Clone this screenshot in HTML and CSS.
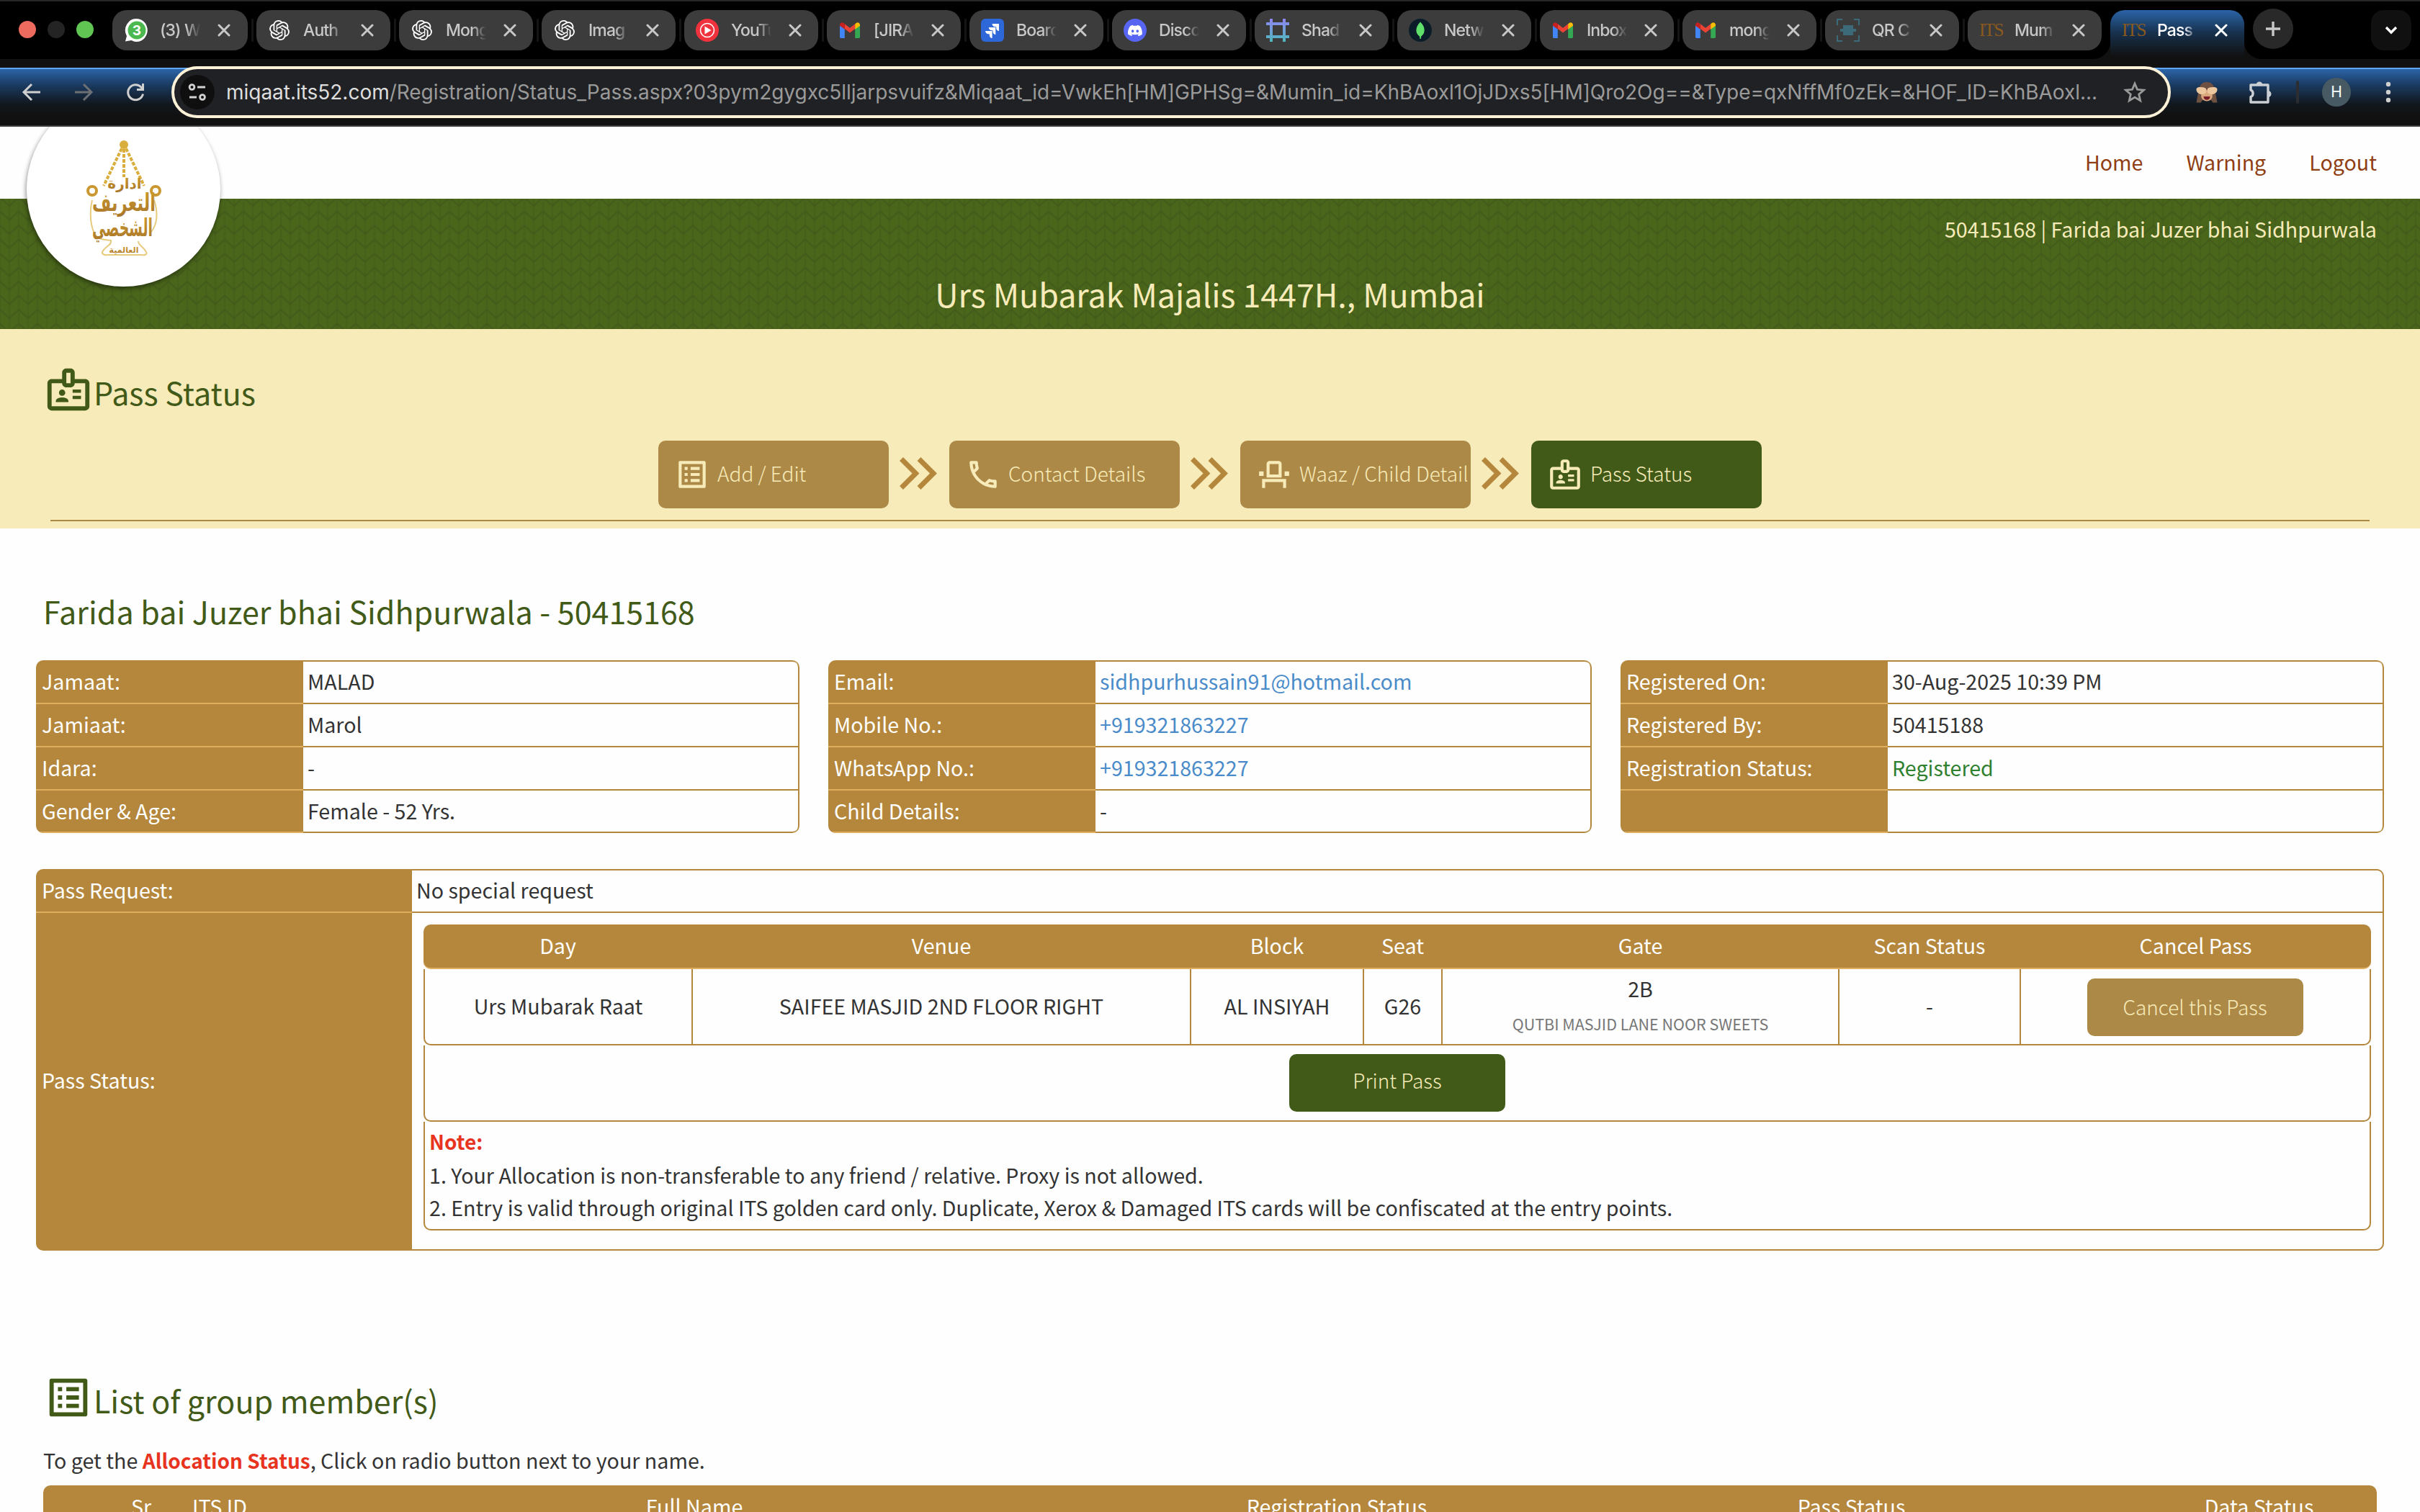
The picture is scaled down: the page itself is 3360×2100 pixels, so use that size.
FILE: index.html
```html
<!DOCTYPE html>
<html lang="en">
<head>
<meta charset="utf-8">
<title>Pass Status</title>
<link rel="stylesheet" href="styles.css">
</head>
<body>
<svg class="sprite" width="0" height="0" aria-hidden="true">
  <defs>
    <linearGradient id="shadeGrad" x1="0" y1="0" x2="0" y2="1"><stop offset="0" stop-color="#8f86f2"/><stop offset="1" stop-color="#4fb8bd"/></linearGradient>
    <linearGradient id="goldGrad" x1="0" y1="0" x2="0" y2="1"><stop offset="0" stop-color="#cf9d2c"/><stop offset="1" stop-color="#a8742a"/></linearGradient>
    <symbol id="openai" viewBox="0 0 24 24"><path fill="#fff" d="M22.2819 9.8211a5.9847 5.9847 0 0 0-.5157-4.9108 6.0462 6.0462 0 0 0-6.5098-2.9A6.0651 6.0651 0 0 0 4.9807 4.1818a5.9847 5.9847 0 0 0-3.9977 2.9 6.0462 6.0462 0 0 0 .7427 7.0966 5.98 5.98 0 0 0 .511 4.9107 6.051 6.051 0 0 0 6.5146 2.9001A5.9847 5.9847 0 0 0 13.2599 24a6.0557 6.0557 0 0 0 5.7718-4.2058 5.9894 5.9894 0 0 0 3.9977-2.9001 6.0557 6.0557 0 0 0-.7475-7.0729zm-9.022 12.6081a4.4755 4.4755 0 0 1-2.8764-1.0408l.1419-.0804 4.7783-2.7582a.7948.7948 0 0 0 .3927-.6813v-6.7369l2.02 1.1686a.071.071 0 0 1 .038.052v5.5826a4.504 4.504 0 0 1-4.4945 4.4944zm-9.6607-4.1254a4.4708 4.4708 0 0 1-.5346-3.0137l.142.0852 4.783 2.7582a.7712.7712 0 0 0 .7806 0l5.8428-3.3685v2.3324a.0804.0804 0 0 1-.0332.0615L9.74 19.9502a4.4992 4.4992 0 0 1-6.1408-1.6464zM2.3408 7.8956a4.485 4.485 0 0 1 2.3655-1.9728V11.6a.7664.7664 0 0 0 .3879.6765l5.8144 3.3543-2.0201 1.1685a.0757.0757 0 0 1-.071 0l-4.8303-2.7865A4.504 4.504 0 0 1 2.3408 7.872zm16.5963 3.8558L13.1038 8.364 15.1192 7.2a.0757.0757 0 0 1 .071 0l4.8303 2.7913a4.4944 4.4944 0 0 1-.6765 8.1042v-5.6772a.79.79 0 0 0-.407-.667zm2.0107-3.0231l-.142-.0852-4.7735-2.7818a.7759.7759 0 0 0-.7854 0L9.409 9.2297V6.8974a.0662.0662 0 0 1 .0284-.0615l4.8303-2.7866a4.4992 4.4992 0 0 1 6.6802 4.66zM8.3065 12.863l-2.02-1.1638a.0804.0804 0 0 1-.038-.0567V6.0742a4.4992 4.4992 0 0 1 7.3757-3.4537l-.142.0805L8.704 5.459a.7948.7948 0 0 0-.3927.6813zm1.0976-2.3654l2.602-1.4998 2.6069 1.4998v2.9994l-2.5974 1.4997-2.6067-1.4997Z"/></symbol>
    <symbol id="gmail" viewBox="0 0 32 32">
      <path fill="#4285f4" d="M2 9v16.5A1.8 1.8 0 0 0 3.8 27H8.800V14z"/>
      <path fill="#34a853" d="M30 9v16.500A1.800 1.800 0 0 1 28.200 27H23.200V14z"/>
      <path fill="#ea4335" d="M8.800 14V7.200L16 12.800l7.200-5.600V14L16 19.600z"/>
      <path fill="#c5221f" d="M2 8.600v1.200l6.800 5V7.200L7 5.800C5 4.400 2 5.800 2 8.600z"/>
      <path fill="#fbbc04" d="M30 8.600v1.200l-6.800 5V7.200L25 5.800c2-1.400 5 0 5 2.800z"/>
    </symbol>
    <symbol id="close" viewBox="0 0 18 18"><path d="M2 2l14 14M16 2L2 16" stroke="currentColor" stroke-width="3" stroke-linecap="round"/></symbol>
    <symbol id="list" viewBox="0 0 24 24"><path fill="currentColor" d="M19 5v14H5V5h14m1.100-2H3.900c-.5 0-.9.4-.9.900v16.200c0 .4.4.9.9.9h16.200c.4 0 .9-.5.9-.9V3.900c0-.5-.5-.9-.9-.9zM11 7h6v2h-6V7zm0 4h6v2h-6v-2zm0 4h6v2h-6zM7 7h2v2H7zm0 4h2v2H7zm0 4h2v2H7z"/></symbol>
    <symbol id="badge" viewBox="0 0 24 24"><path fill="currentColor" fill-rule="evenodd" d="M20 7h-5V4c0-1.100-.9-2-2-2h-2c-1.100 0-2 .9-2 2v3H4c-1.100 0-2 .9-2 2v11c0 1.100.9 2 2 2h16c1.100 0 2-.9 2-2V9c0-1.100-.9-2-2-2zM11 4h2v5h-2zM20 20H4V9h5c0 1.100.9 2 2 2h2c1.100 0 2-.9 2-2h5z"/><path fill="currentColor" d="M9 12c.83 0 1.500.67 1.500 1.500S9.830 15 9 15s-1.500-.67-1.500-1.500S8.170 12 9 12zM12 18H6v-.43c0-.6.36-1.150.92-1.390a5.300 5.300 0 0 1 4.160 0c.56.24.92.79.92 1.390zM14 12h4v1.500h-4zM14 15h4v1.500h-4z"/></symbol>
    <symbol id="chev" viewBox="0 0 52 45"><path fill="none" stroke="#b4873c" stroke-width="7" d="M2.500 2.500L22.500 22.500 2.500 42.500M27 2.500L47 22.500 27 42.500"/></symbol>
  </defs>
</svg>

<div class="browser">
  <div class="tabstrip">
    <div class="lights"><i class="red"></i><i class="off"></i><i class="green"></i></div>
    <div class="tabs">
      <div class="tab first"><svg class="fav" viewBox="0 0 32 32"><path fill="#fff" d="M17 0a15 16 0 1 1-7.500 30L1 31.500 3 24A15.500 16 0 0 1 17 0z"/><circle cx="17" cy="16" r="12.500" fill="#4cb950"/><text x="17" y="22.500" class="fav-num" text-anchor="middle">3</text></svg><span class="tt">(3) W</span><svg class="x"><use href="#close"/></svg></div>
      <div class="tab"><svg class="fav sm"><use href="#openai"/></svg><span class="tt">Auth</span><svg class="x"><use href="#close"/></svg></div>
      <div class="tab"><svg class="fav sm"><use href="#openai"/></svg><span class="tt">Mong</span><svg class="x"><use href="#close"/></svg></div>
      <div class="tab"><svg class="fav sm"><use href="#openai"/></svg><span class="tt">Imag</span><svg class="x"><use href="#close"/></svg></div>
      <div class="tab"><svg class="fav" viewBox="0 0 32 32"><circle cx="16" cy="16" r="16" fill="#f0323c"/><circle cx="16" cy="16" r="9.500" fill="none" stroke="#fff" stroke-width="1.600"/><path fill="#fff" d="M12.500 10.500v11l9-5.500z"/></svg><span class="tt">YouTu</span><svg class="x"><use href="#close"/></svg></div>
      <div class="tab"><svg class="fav"><use href="#gmail"/></svg><span class="tt">[JIRA</span><svg class="x"><use href="#close"/></svg></div>
      <div class="tab"><svg class="fav" viewBox="0 0 32 32"><rect width="32" height="32" rx="6" fill="#2e67d8"/><path fill="#fff" d="M25 7H15.500c0 2.400 1.900 4.200 4.200 4.200h1.500v1.500c0 2.400 1.600 4.200 3.800 4.200zM20.300 12h-9.500c0 2.400 1.900 4.200 4.200 4.200h1.500v1.500c0 2.400 1.600 4.200 3.800 4.200zM15.600 17H6.100c0 2.400 1.900 4.200 4.200 4.200h1.500v1.500c0 2.400 1.600 4.200 3.800 4.200z"/></svg><span class="tt">Board</span><svg class="x"><use href="#close"/></svg></div>
      <div class="tab"><svg class="fav" viewBox="0 0 32 32"><circle cx="16" cy="16" r="16" fill="#5865f2"/><path transform="translate(6 6.500) scale(.83)" fill="#fff" d="M20.317 4.370a19.791 19.791 0 0 0-4.885-1.515.074.074 0 0 0-.079.037c-.211.375-.445.865-.608 1.250-1.845-.276-3.680-.276-5.487 0-.164-.393-.406-.874-.618-1.250a.077.077 0 0 0-.079-.037 19.736 19.736 0 0 0-4.885 1.515.070.070 0 0 0-.032.028C.533 9.046-.319 13.580.099 18.058a.082.082 0 0 0 .031.056c2.053 1.508 4.041 2.423 5.993 3.029a.078.078 0 0 0 .084-.028c.462-.630.873-1.295 1.226-1.994-.650-.250-1.300-.550-1.914-.998l.364-.419c3.928 1.793 8.180 1.793 12.140 0l.366.420c-.600.400-1.250.750-1.880 1-.040.010.800 1.400 1.184 2.100a.076.076 0 0 0 .084.029c1.961-.607 3.950-1.522 6.002-3.029a.077.077 0 0 0 .031-.055c.500-5.177-.838-9.674-3.548-13.660zM8.020 15.331c-1.183 0-2.157-1.086-2.157-2.419s.956-2.419 2.157-2.419 2.176 1.095 2.157 2.419c0 1.333-.956 2.419-2.157 2.419zm7.975 0c-1.183 0-2.157-1.086-2.157-2.419s.955-2.419 2.157-2.419 2.176 1.095 2.157 2.419c0 1.333-.946 2.419-2.157 2.419z"/></svg><span class="tt">Disco</span><svg class="x"><use href="#close"/></svg></div>
      <div class="tab"><svg class="fav" viewBox="0 0 32 32"><path fill="url(#shadeGrad)" d="M5 0h4v5h14V0h4v5h5v4h-5v14h5v4h-5v5h-4v-5H9v5H5v-5H0v-4h5V9H0V5h5zM9 9v14h14V9z"/></svg><span class="tt">Shad</span><svg class="x"><use href="#close"/></svg></div>
      <div class="tab"><svg class="fav" viewBox="0 0 32 32"><circle cx="16" cy="16" r="16" fill="#0b1d28"/><path fill="#5fe06a" d="M16 4.500c4 4 6 7.500 5.600 12.500-.3 3.500-2.200 5.700-4.400 7.500L16.700 28h-1.200l-.5-3.500c-2.500-2-4.400-4-4.600-7.700C10.200 12 12.500 8 16 4.500z"/></svg><span class="tt">Netw</span><svg class="x"><use href="#close"/></svg></div>
      <div class="tab"><svg class="fav"><use href="#gmail"/></svg><span class="tt">Inbox</span><svg class="x"><use href="#close"/></svg></div>
      <div class="tab"><svg class="fav"><use href="#gmail"/></svg><span class="tt">mong</span><svg class="x"><use href="#close"/></svg></div>
      <div class="tab"><svg class="fav" viewBox="0 0 32 32"><g fill="none" stroke="#3d6a78" stroke-width="2"><path d="M1 9V1h7M24 1h7v8M31 23v8h-7M8 31H1v-8"/></g><path fill="#3d6a78" d="M9 9h14v5h4v4h-4v5H9v-5H5v-4h4z"/></svg><span class="tt">QR C</span><svg class="x"><use href="#close"/></svg></div>
      <div class="tab last"><span class="its">ITS</span><span class="tt">Mum</span><svg class="x"><use href="#close"/></svg></div>
      <div class="tab active"><span class="its">ITS</span><span class="tt">Pass</span><svg class="x"><use href="#close"/></svg></div>
    </div>
    <div class="newtab"><svg width="22" height="22" viewBox="0 0 22 22"><path d="M11 1v20M1 11h20" stroke="#c9c9c9" stroke-width="3.400"/></svg></div>
    <div class="tabsearch"><svg width="18" height="12" viewBox="0 0 18 12"><path d="M2 2l7 7 7-7" fill="none" stroke="#fff" stroke-width="3.400"/></svg></div>
  </div>
  <div class="toolbar">
    <div class="navbtns">
      <svg width="32" height="32" viewBox="0 0 32 32"><path d="M28 16H6M16 5L5 16l11 11" fill="none" stroke="#cfcfcf" stroke-width="3"/></svg>
      <svg width="32" height="32" viewBox="0 0 32 32"><path d="M4 16h22M16 5l11 11-11 11" fill="none" stroke="#6c6f73" stroke-width="3"/></svg>
      <svg width="32" height="32" viewBox="0 0 32 32"><path d="M26.500 18.500A10.500 10.500 0 1 1 24 9.200L26 11.500M26.500 4v8.500H18" fill="none" stroke="#cfcfcf" stroke-width="3"/></svg>
    </div>
    <div class="omnibox">
      <div class="site"><svg width="26" height="26" viewBox="0 0 26 26"><g fill="none" stroke="#d2d2d2" stroke-width="2.800"><circle cx="5.500" cy="6" r="3.400"/><path d="M13 6h11M2 20h10"/><circle cx="20" cy="20" r="3.400"/></g></svg></div>
      <div class="url"><b>miqaat.its52.com</b>/Registration/Status_Pass.aspx?03pym2gygxc5lljarpsvuifz&amp;Miqaat_id=VwkEh[HM]GPHSg=&amp;Mumin_id=KhBAoxl1OjJDxs5[HM]Qro2Og==&amp;Type=qxNffMf0zEk=&amp;HOF_ID=KhBAoxl...</div>
      <svg class="star" width="32" height="32" viewBox="0 0 32 32"><path d="M16 4l3.500 8.300 9 .8-6.800 5.900 2 8.800-7.700-4.700-7.700 4.700 2-8.800-6.800-5.900 9-.8z" fill="none" stroke="#9a9a9a" stroke-width="2.800"/></svg>
    </div>
    <div class="exts">
      <svg class="monkey" width="32" height="32" viewBox="0 0 32 32"><path fill="#6f5142" d="M16 2C9 2 6 7 5 12L1.500 30.500h6L11 26h10l3.500 4.500h6L27 12C26 7 23 2 16 2z"/><ellipse cx="16" cy="21" rx="8" ry="7.500" fill="#d9a77e"/><path fill="#ecc69c" d="M1.500 13c-.5-3.500 3-4.500 6.500-4s7.500.5 7.500 4.500-2.500 5.500-6 5.500-7.500-2-8-6zM30.500 13c.5-3.500-3-4.500-6.500-4s-7.500.5-7.500 4.500 2.500 5.500 6 5.500 7.500-2 8-6z"/><path fill="#7a1f2a" d="M11.500 22h9c0 3-1.800 4.700-4.500 4.700s-4.500-1.700-4.500-4.700z"/></svg>
      <svg class="puzzle" width="36" height="36" viewBox="0 0 36 36"><path fill="none" stroke="#cbd0d4" stroke-width="3.400" stroke-linejoin="round" d="M5 8h24v24H5v-7.500a4.500 5 0 0 0 0-9.500z"/><path fill="#cbd0d4" d="M12.500 8a4.500 4.500 0 0 1 9 0zM29 16a4.500 4.500 0 0 1 0 9z"/></svg>
      <i class="bar"></i>
      <div class="avatar">H</div>
      <svg class="dots" width="8" height="30" viewBox="0 0 8 30"><g fill="#d0d0d0"><circle cx="4" cy="4" r="3.200"/><circle cx="4" cy="15" r="3.200"/><circle cx="4" cy="26" r="3.200"/></g></svg>
    </div>
  </div>
</div>

<div class="page">
  <header>
    <nav class="links"><a>Home</a><a>Warning</a><a>Logout</a></nav>
    <div class="banner">
      <div class="user">50415168 | Farida bai Juzer bhai Sidhpurwala</div>
      <h1>Urs Mubarak Majalis 1447H., Mumbai</h1>
    </div>
    <div class="seal-clip"><div class="seal">
      <svg width="104" height="162" viewBox="0 0 104 162">
        <g fill="none" stroke="#d9ae3c" stroke-width="4" stroke-dasharray="5 2"><path d="M52 6L24 64M52 6v46M52 6l28 58"/></g>
        <circle cx="52" cy="7" r="6" fill="#d9ae3c"/>
        <g fill="none" stroke="#e6cb7e" stroke-width="2"><path d="M8 84c-4 16-3 40 6 50 6 6 14 5 20 6 2 6-8 8-12 16-1 3 4 5 8 4h46c5 1 9-1 7-4-4-8-11-9-11-15M94 84c6 18 4 34-4 44"/></g>
        <g fill="none" stroke="#c9982f" stroke-width="4"><circle cx="8" cy="71" r="6"/><circle cx="96" cy="71" r="6"/></g>
        <g class="arabic" text-anchor="middle" fill="url(#goldGrad)"><text x="53" y="68" font-size="20">ادارة</text><text x="52" y="99" font-size="34" textLength="88" lengthAdjust="spacingAndGlyphs">التعريف</text><text x="50" y="134" font-size="34" textLength="84" lengthAdjust="spacingAndGlyphs">الشخصي</text><text x="52" y="157" font-size="11">العالمية</text></g>
      </svg>
    </div></div>
  </header>

  <section class="steps-area">
    <h2 class="icon-title"><svg><use href="#badge"/></svg>Pass Status</h2>
    <div class="steps">
      <div class="step"><svg><use href="#list"/></svg><span>Add / Edit</span></div>
      <svg class="chev"><use href="#chev"/></svg>
      <div class="step"><svg viewBox="0 0 24 24"><path fill="currentColor" d="M6.540 5c.06.89.21 1.760.45 2.590l-1.200 1.200c-.41-1.200-.67-2.470-.76-3.790h1.510m9.860 12.020c.85.24 1.720.39 2.600.45v1.490c-1.320-.09-2.590-.35-3.800-.75l1.200-1.190M7.500 3H4c-.55 0-1 .45-1 1 0 9.390 7.610 17 17 17 .55 0 1-.45 1-1v-3.490c0-.55-.45-1-1-1-1.240 0-2.450-.2-3.570-.57-.1-.04-.21-.05-.31-.05-.26 0-.51.1-.71.29l-2.200 2.200c-2.830-1.450-5.150-3.760-6.590-6.590l2.200-2.200c.28-.28.36-.67.25-1.020C8.700 6.450 8.500 5.250 8.500 4c0-.55-.45-1-1-1z"/></svg><span>Contact Details</span></div>
      <svg class="chev"><use href="#chev"/></svg>
      <div class="step"><svg viewBox="0 0 24 24"><path fill="currentColor" d="M15 5v7H9V5h6m0-2H9c-1.100 0-2 .9-2 2v9h10V5c0-1.100-.9-2-2-2zm7 7h-3v3h3v-3zM5 10H2v3h3v-3zm15 5H4v6h2v-4h12v4h2v-6z"/></svg><span>Waaz / Child Detail</span></div>
      <svg class="chev"><use href="#chev"/></svg>
      <div class="step current"><svg><use href="#badge"/></svg><span>Pass Status</span></div>
    </div>
    <hr>
  </section>

  <main>
    <h2 class="person">Farida bai Juzer bhai Sidhpurwala - 50415168</h2>
    <div class="cards">
      <dl class="info"><dt>Jamaat:</dt><dd>MALAD</dd><dt>Jamiaat:</dt><dd>Marol</dd><dt>Idara:</dt><dd>-</dd><dt>Gender &amp; Age:</dt><dd>Female - 52 Yrs.</dd></dl>
      <dl class="info"><dt>Email:</dt><dd class="link">sidhpurhussain91@hotmail.com</dd><dt>Mobile No.:</dt><dd class="link">+919321863227</dd><dt>WhatsApp No.:</dt><dd class="link">+919321863227</dd><dt>Child Details:</dt><dd>-</dd></dl>
      <dl class="info"><dt>Registered On:</dt><dd>30-Aug-2025 10:39 PM</dd><dt>Registered By:</dt><dd>50415188</dd><dt>Registration Status:</dt><dd class="ok">Registered</dd><dt></dt><dd></dd></dl>
    </div>

    <div class="request">
      <div class="lab top">Pass Request:</div><div class="val top">No special request</div>
      <div class="lab">Pass Status:</div>
      <div class="val body">
        <div class="row head"><span>Day</span><span>Venue</span><span>Block</span><span>Seat</span><span>Gate</span><span>Scan Status</span><span>Cancel Pass</span></div>
        <div class="row data"><span>Urs Mubarak Raat</span><span>SAIFEE MASJID 2ND FLOOR RIGHT</span><span>AL INSIYAH</span><span>G26</span><span class="gate">2B<small>QUTBI MASJID LANE NOOR SWEETS</small></span><span>-</span><span class="action"><button class="btn">Cancel this Pass</button></span></div>
        <div class="print"><button class="btn dark">Print Pass</button></div>
        <div class="note"><strong>Note:</strong><br>1. Your Allocation is non-transferable to any friend / relative. Proxy is not allowed.<br>2. Entry is valid through original ITS golden card only. Duplicate, Xerox &amp; Damaged ITS cards will be confiscated at the entry points.</div>
      </div>
    </div>

    <h2 class="icon-title group"><svg><use href="#list"/></svg>List of group member(s)</h2>
    <p class="hint">To get the <strong>Allocation Status</strong>, Click on radio button next to your name.</p>
    <div class="members"><span></span><span>Sr.</span><span>ITS ID</span><span class="c">Full Name</span><span class="c">Registration Status</span><span class="c">Pass Status</span><span class="c end">Data Status</span></div>
  </main>
</div>
</body>
</html>
```
FILE: styles.css
```css
* { box-sizing: border-box; }
body { margin: 0; width: 3360px; height: 2100px; overflow: hidden; background: #fefefe; color: #333; font: 28.640px/46px "Noto Sans CJK SC", "Noto Sans", sans-serif; }
h1, h2, p, dl, dd { margin: 0; font-weight: 400; }
.sprite { position: absolute; }

/* browser window */
.browser { font-family: Inter, "Liberation Sans", sans-serif; height: 176px; background: #111; border-top: 2px solid #262626; border-bottom: 2px solid #3f3c3f; display: flex; flex-direction: column; }
.tabstrip { height: 80px; background: #000; display: flex; padding-top: 12px; }
.lights { display: flex; gap: 16px; width: 156px; padding: 15px 0 0 26px; }
.lights i { width: 24px; height: 24px; border-radius: 50%; }
.red { background: #ec6a5e; } .off { background: #242424; } .green { background: #61c554; }
.tabs { display: flex; gap: 12px; }
.tab { position: relative; width: 186px; height: 56px; border-radius: 20px; background: #3c3c3c; color: #c8c8c8; display: flex; align-items: center; padding-left: 16px; font-size: 23px; font-weight: 500; line-height: 32px; }
.tab.first { width: 188px; padding-left: 17px; }
.tab::after { content: ""; position: absolute; left: 100%; margin-left: 5px; top: 12px; width: 3px; height: 32px; background: #151515; border-radius: 1px; }
.tab.last::after { display: none; }
.fav { width: 32px; height: 32px; flex: none; }
.fav.sm { padding: 2px; }
.fav-num { font: 700 19px Inter, sans-serif; fill: #fff; }
.its { width: 32px; font: 25px/32px "Liberation Serif", serif; color: #8c5a1c; letter-spacing: -1.500px; }
.tt { width: 56px; margin: 0 19px 0 17px; overflow: hidden; white-space: nowrap; letter-spacing: -.9px; -webkit-mask: linear-gradient(90deg, #000 65%, transparent 100%); mask: linear-gradient(90deg, #000 65%, transparent 100%); }
.x { width: 18px; height: 18px; margin-left: 5px; flex: none; }
.tab.active { height: 68px; padding-bottom: 12px; border-radius: 20px 20px 0 0; color: #fff; background: linear-gradient(#2b64a8, #17324f 45%, #111 95%); }
.tab.active::before, .tab.active::after { content: ""; position: absolute; display: block; top: 44px; width: 24px; height: 24px; margin: 0; border-radius: 0; }
.tab.active::before { left: -24px; background: radial-gradient(circle at 0 0, transparent 23.500px, #111 24.500px); }
.tab.active::after { left: 186px; background: radial-gradient(circle at 100% 0, transparent 23.500px, #111 24.500px); }
.newtab { width: 56px; height: 56px; margin: -2px 0 0 12px; border-radius: 50%; background: #292929; display: grid; place-items: center; }
.tabsearch { width: 56px; height: 56px; margin: 0 12px 0 auto; border-radius: 18px; background: #101010; display: grid; place-items: center; }
.toolbar { height: 92px; padding-top: 10px; display: flex; background: linear-gradient(#62a5f0, #62a5f0) 0 12px / 100% 2px no-repeat, linear-gradient(#2b64a8, #1a3a60 35%, #12181f 75%, #111) 0 14px / 100% 64px no-repeat, #111; }
.navbtns { width: 238px; padding-left: 28px; display: flex; gap: 40px; align-items: center; height: 72px; }
.omnibox { width: 2776px; height: 72px; border: 4px solid #fdf1d8; border-radius: 36px; background: #202124; display: flex; align-items: center; padding-left: 8px; }
.site { width: 48px; height: 48px; border-radius: 50%; background: #0f0f0f; display: grid; place-items: center; }
.url { width: 2600px; margin-left: 16px; white-space: nowrap; font-size: 28px; letter-spacing: -.025px; line-height: 40px; color: #9a9a9a; }
.url b { font-weight: 400; color: #dedede; }
.star { margin-left: 34px; }
.exts { display: flex; align-items: center; height: 72px; }
.monkey { margin-left: 34px; }
.puzzle { margin-left: 40px; }
.bar { width: 4px; height: 32px; border-radius: 2px; background: #2b2d30; margin-left: 32px; }
.avatar { width: 40px; height: 40px; margin-left: 32px; border-radius: 50%; background: #475a64; color: #fff; font-size: 21px; line-height: 40px; text-align: center; }
.dots { margin-left: 48px; }

/* site header */
header { position: relative; }
.links { height: 100px; display: flex; justify-content: flex-end; gap: 60px; padding-right: 60px; line-height: 98px; color: #8f3d12; }
.banner { height: 181px; color: #f7ebb9; background: #4a661b url("data:image/svg+xml,%3Csvg xmlns='http://www.w3.org/2000/svg' width='26' height='39' viewBox='0 0 26 39'%3E%3Cg fill='none' stroke='%2342591a' stroke-width='2.600'%3E%3Cpath opacity='.75' d='M0-2L13 10 26-2M0 17.500L13 29.500 26 17.500M0 37L13 49 26 37M0-21.500L13-9.500 26-21.500'/%3E%3Cpath opacity='.4' d='M13 0v39M0 0v39M26 0v39'/%3E%3C/g%3E%3C/svg%3E"); }
.user { height: 86px; padding-right: 60px; text-align: right; line-height: 83px; }
h1 { font-size: 44.750px; line-height: 92px; text-align: center; height: 95px; }
.seal-clip { position: absolute; left: 0; top: 0; width: 340px; height: 281px; overflow: hidden; }
.seal { position: absolute; left: 37px; top: -47px; width: 269px; height: 269px; border-radius: 50%; background: #fff; box-shadow: -1px 3px 6px rgba(0,0,0,.45); display: grid; place-items: center; padding-top: 22px; }
.arabic { font-family: "DejaVu Sans", sans-serif; font-weight: 700; }

/* steps */
.steps-area { height: 277px; background: #f7ebb9; padding: 45px 70px 0; }
.icon-title { display: flex; align-items: center; color: #425a18; font-size: 43px; line-height: 84px; height: 84px; }
.icon-title svg { width: 70px; height: 70px; margin: -6px 0 0 -10px; }
.steps { display: flex; justify-content: center; align-items: center; margin-top: 26px; }
.step { width: 320px; height: 94px; border-radius: 10px; background: #ad8947; color: #f7ebb9; display: flex; align-items: center; padding-left: 22px; white-space: nowrap; font-size: 28px; font-weight: 300; }
.step svg { width: 50px; height: 50px; margin-right: 10px; flex: none; }
.step span { padding-bottom: 5px; }
.step.current { background: #425a18; }
.chev { width: 52px; height: 45px; margin: -3px 17px 0 15px; }
hr { border: 0; height: 2px; background: #ad8947; margin: 16px 0 0; }

/* content */
.person { color: #425a18; font-size: 43px; line-height: 80px; height: 183px; padding: 74px 0 0 60px; }
.cards { display: grid; grid-template-columns: repeat(3, 1060px); gap: 40px; padding-left: 50px; }
.info { display: grid; grid-template-columns: 371px 1fr; grid-template-rows: 61px 60px 60px 59px; border-radius: 10px; overflow: hidden; border: 2px solid #b4873c; border-width: 0 2px 0 0; }
.info dt { background: #b4873c; color: #fff; border-bottom: 2px solid #dfae5e; padding-left: 8px; line-height: 55px; }
.info dt:first-child { line-height: 57px; }
.info dd { border-bottom: 2px solid #b4873c; padding-left: 6px; line-height: 55px; }
.info dd:nth-of-type(1) { border-top: 2px solid #b4873c; line-height: 54px; }
.info dd:nth-of-type(4) { border-bottom-right-radius: 8px; }
.info dd:nth-of-type(1) { border-top-right-radius: 8px; }
.link { color: #4a8bc9; }
.ok { color: #2f8130; }
.request { margin: 50px 50px 0; display: grid; grid-template-columns: 522px 1fr; grid-template-rows: 61px 469px; border-radius: 10px; }
.lab { background: #b4873c; color: #fff; padding-left: 8px; line-height: 464px; border-bottom-left-radius: 10px; }
.lab.top { line-height: 58px; border-bottom: 2px solid #dfae5e; border-radius: 10px 0 0 0; }
.val { border-right: 2px solid #b4873c; border-bottom: 2px solid #b4873c; }
.val.top { border-top: 2px solid #b4873c; border-top-right-radius: 10px; padding-left: 6px; line-height: 54px; }
.val.body { border-bottom-right-radius: 10px; padding: 16px 16px 0; }
.row { display: grid; grid-template-columns: 373px 692px 240px 109px 551px 252px 1fr; text-align: center; }
.head { height: 62px; background: #b4873c; color: #fff; border-bottom: 2px solid #dfae5e; border-radius: 10px; line-height: 58px; }
.data { height: 106px; border: 2px solid #b4873c; border-top: 0; border-radius: 0 0 10px 10px; grid-template-columns: 372px 692px 240px 109px 551px 252px 1fr; }
.data > span { border-right: 2px solid #b4873c; display: flex; align-items: center; justify-content: center; padding-bottom: 3px; }
.data > span:last-child { border: 0; padding: 0 1px 0 0; }
.data > .gate { flex-direction: column; line-height: 44px; justify-content: flex-start; padding-top: 5px; }
.gate small { font-size: 21.500px; color: #777; line-height: 53px; }
.btn { width: 300px; height: 80px; border: 0; border-radius: 10px; background: #ad8947; color: #f7ebb9; font: inherit; font-size: 28px; font-weight: 300; padding: 0 0 2px; }
.btn.dark { background: #425a18; padding-bottom: 8px; }
.print { height: 106px; border: 2px solid #b4873c; border-top: 0; border-radius: 0 0 10px 10px; display: flex; justify-content: center; align-items: flex-start; padding-top: 12px; }
.note { height: 151px; border: 2px solid #b4873c; border-top: 0; border-radius: 0 0 10px 10px; padding: 4px 6px 0; line-height: 45.500px; }
strong { color: #e8331f; font-size: 28px; }
.group { margin: 165px 0 0 70px; }
.hint { padding-left: 60px; margin-top: 19px; line-height: 46px; }
.members { margin: 12px 60px 0; height: 80px; background: #b4873c; color: #fff; border-radius: 10px 10px 0 0; display: grid; grid-template-columns: 122px 85px 194px 1006px 778px 651px 1fr; line-height: 58px; }
.c { text-align: center; }
.end { padding-left: 77px; }
```
